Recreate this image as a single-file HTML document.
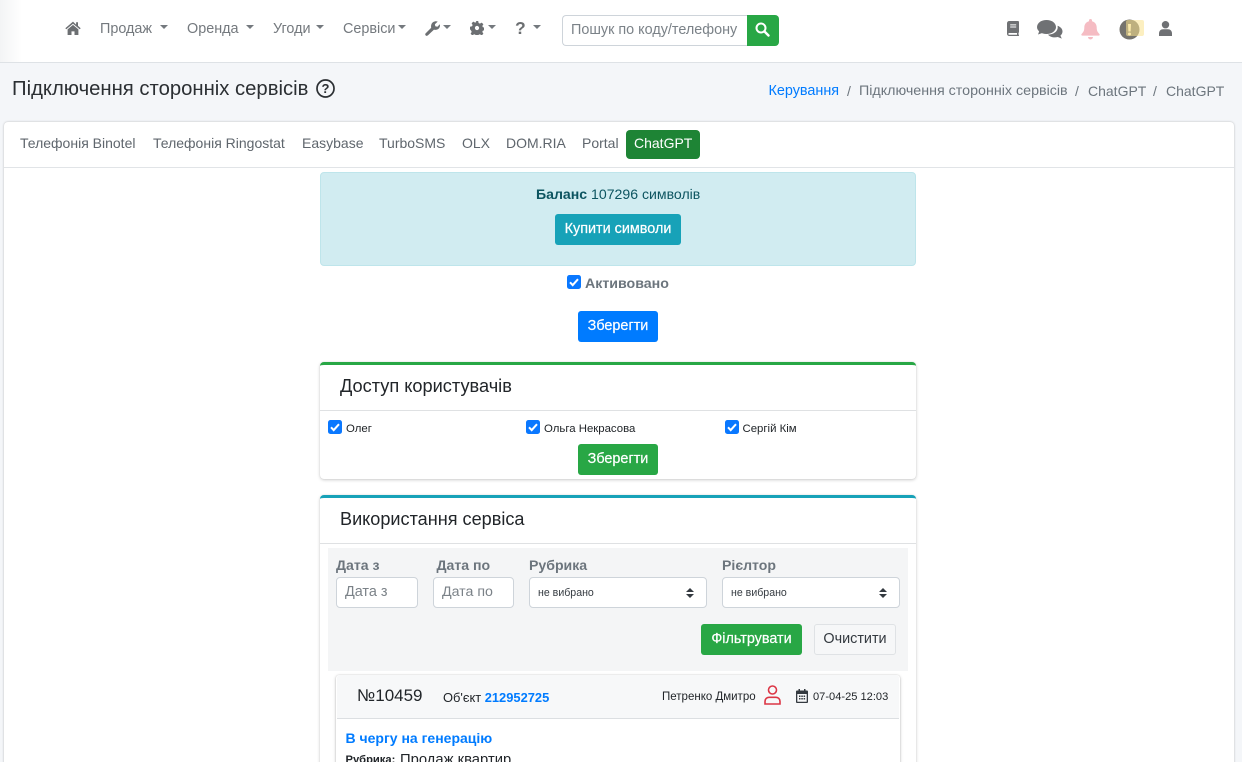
<!DOCTYPE html>
<html lang="uk"><head><meta charset="utf-8"><title>ChatGPT</title>
<style>
html,body{margin:0;padding:0;width:1242px;height:762px;overflow:hidden}
#p{width:1242px;height:762px;position:relative;overflow:hidden;background:#f4f6f9;font-family:"Liberation Sans",sans-serif;font-size:14px;color:#212529}
.a{position:absolute;white-space:nowrap;line-height:1.2}
.box{position:absolute;box-sizing:border-box}
.btn{position:absolute;box-sizing:border-box;border-radius:3px;color:#fff;font-size:14.4px;text-align:center;white-space:nowrap;-webkit-text-stroke:.2px #fff}
.nav{color:#74797e;font-size:14.4px}
.car{position:absolute;width:0;height:0;border-left:4px solid transparent;border-right:4px solid transparent;border-top:4px solid #74797e}
.tab{color:#5f666d;font-size:14px;top:135px}
.cb{position:absolute;width:14px;height:14px;background:#0a78ff;border-radius:2.5px}
.cb svg{position:absolute;left:0;top:0}
.lab{color:#6c757d;font-weight:bold;font-size:14.1px}
.inp{position:absolute;box-sizing:border-box;background:#fff;border:1px solid #ced4da;border-radius:4px}
svg{position:absolute;display:block}
</style></head><body><div id="p">

<div class="box" style="left:0;top:0;width:1242px;height:63px;background:linear-gradient(90deg,#f3f4f5 0,#fff 22px);border-bottom:1px solid #dee2e6"></div>

<svg style="left:65px;top:21px" width="16" height="14" viewBox="0 0 16 14"><path d="M8 0.6L0.3 7.2l1 1.1L8 2.7l6.7 5.6 1-1.1-2.7-2.3V1.2h-1.9v2.4zM2.6 8.4V14h3.9v-3.6h3V14h3.9V8.4L8 3.9z" fill="#6c6f72"/></svg>
<div class="a nav" style="left:100px;top:21px">Продаж</div><div class="car" style="left:160px;top:25px"></div>
<div class="a nav" style="left:187px;top:21px">Оренда</div><div class="car" style="left:246px;top:25px"></div>
<div class="a nav" style="left:273px;top:21px">Угоди</div><div class="car" style="left:316px;top:25px"></div>
<div class="a nav" style="left:343px;top:21px">Сервіси</div><div class="car" style="left:398px;top:25px"></div>
<svg style="left:425px;top:21px" width="15" height="15" viewBox="0 0 15 15"><path d="M1 14.6c-.8-.5-1-1.4-.5-2.1L6.200 6.800C5.700 4.700 6.300 2.200 8.200 1 9.800 0 11.500 0 12.700 .6L9.900 3.200l.4 2.100 2.100.5 2.400-2.600c.5 1.800-.1 3.600-1.400 4.700-1.300 1-3 1.200-4.400.7L3 14.300c-.6.600-1.400.8-2 .3z" fill="#6c6f72"/></svg><div class="car" style="left:443px;top:25px"></div>
<svg style="left:470px;top:21px" width="14" height="14" viewBox="0 0 14 14"><path d="M5.800 0h2.400l.4 2 1.300.6 1.800-1 1.700 1.700-1.100 1.700.6 1.300 2.100.5v2.400l-2.100.4-.6 1.300 1.100 1.800-1.700 1.700-1.800-1.100-1.300.5-.4 2.100H5.800l-.4-2.100-1.300-.5-1.800 1.100L.6 12.700l1.100-1.800-.6-1.300L0 8.200V5.800l2.100-.5.500-1.300-1-1.700L3.300 .6l1.800 1 1.300-.6zM7 4.900A2.100 2.100 0 1 0 7 9.100 2.100 2.100 0 0 0 7 4.900z" fill="#6c6f72"/></svg><div class="car" style="left:488px;top:25px"></div>
<div class="a" style="left:515px;top:18px;font-size:17.5px;font-weight:bold;color:#6c6f72">?</div><div class="car" style="left:533px;top:25px"></div>

<div class="box" style="left:562px;top:15px;width:186px;height:31px;background:#fff;border:1px solid #ced4da;border-right:0;border-radius:4px 0 0 4px"></div>
<div class="a" style="left:571px;top:22px;color:#7b8288;font-size:14.4px">Пошук по коду/телефону</div>
<div class="box" style="left:747px;top:15px;width:32px;height:31px;background:#28a745;border-radius:0 4px 4px 0"></div>
<svg style="left:755px;top:22px" width="15" height="15" viewBox="0 0 15 15"><circle cx="6" cy="6" r="4.500" fill="none" stroke="#fff" stroke-width="2"/><path d="M9.500 9.500L13.500 13.500" stroke="#fff" stroke-width="2.400" stroke-linecap="round"/></svg>

<svg style="left:1007px;top:21px" width="12" height="15" viewBox="0 0 12 15"><path d="M2.200 0H11a1 1 0 0 1 1 1v10c0 .4-.2.700-.5.900v1.600c.3.200.5.400.5.700v.3c0 .3-.2.500-.5.500H2.200A2.200 2.200 0 0 1 0 12.800V2.200A2.200 2.200 0 0 1 2.200 0zM2.200 12a.9.900 0 1 0 0 1.800H10V12zM3.200 3.400v1h6v-1zm0 2.100v1h6v-1z" fill-rule="evenodd" fill="#6f7174"/></svg>
<svg style="left:1037px;top:20px" width="26" height="19" viewBox="0 0 26 19"><ellipse cx="9.500" cy="7" rx="9.500" ry="7" fill="#6f7174"/><path d="M2.500 10.500L1 14.500l5-1.800z" fill="#6f7174"/><path d="M20.500 5.800c3 1 5 3.200 5 5.700 0 1.600-.8 3-2.100 4.100l1.400 3-4-1.600c-1 .3-2 .4-3 .4-2.900 0-5.400-1.100-6.800-2.800 6.100.1 10.800-3.900 9.500-8.800z" fill="#6f7174"/></svg>
<svg style="left:1081px;top:19px" width="19" height="21" viewBox="0 0 19 21"><path d="M9.500 0a1.500 1.500 0 0 1 1.500 1.500v.7c3 .7 4.700 3.200 4.700 6.200 0 3.800 1.200 5 2.700 6.600.6.700.2 1.600-.7 1.600H1.300c-.9 0-1.300-.9-.7-1.600C2.100 13.400 3.300 12.200 3.300 8.400c0-3 1.700-5.500 4.700-6.200v-.7A1.500 1.500 0 0 1 9.500 0zM7 18h5a2.500 2.500 0 0 1-5 0z" fill="#f5bcc3"/></svg>
<svg style="left:1119px;top:19px" width="21" height="21" viewBox="0 0 21 21"><circle cx="10.500" cy="10.500" r="10" fill="#75736d"/><path d="M9 5h3l-.4 7.500H9.400z" fill="#fdf3cf"/><circle cx="10.500" cy="15" r="1.500" fill="#fdf3cf"/></svg>
<div class="box" style="left:1126px;top:20px;width:18px;height:16px;background:rgba(250,225,140,.55);border-radius:2px"></div>
<svg style="left:1159px;top:21px" width="13" height="15" viewBox="0 0 13 15"><circle cx="6.500" cy="3.700" r="3.700" fill="#6f7174"/><path d="M0 15v-2.500C0 10 1.800 8.300 4 8.300h5c2.200 0 4 1.700 4 4.200V15z" fill="#6f7174"/></svg>

<div class="a" style="left:12px;top:77px;font-size:20.27px;color:#2b2f33">Підключення сторонніх сервісів</div>
<svg style="left:316px;top:79px" width="19" height="19" viewBox="0 0 19 19"><circle cx="9.500" cy="9.500" r="8.500" fill="none" stroke="#2b2f33" stroke-width="1.700"/><text x="9.500" y="14.200" font-family="Liberation Sans" font-weight="bold" font-size="13" fill="#2b2f33" text-anchor="middle">?</text></svg>

<div class="a" style="left:768.500px;top:83px;color:#007bff;font-size:14.4px">Керування</div>
<div class="a" style="left:847px;top:82.500px;color:#6c757d">/</div>
<div class="a" style="left:859px;top:83px;color:#6c757d;font-size:14.27px">Підключення сторонніх сервісів</div>
<div class="a" style="left:1075px;top:82.500px;color:#6c757d">/</div>
<div class="a" style="left:1088px;top:82.500px;color:#6c757d">ChatGPT</div>
<div class="a" style="left:1153px;top:82.500px;color:#6c757d">/</div>
<div class="a" style="left:1166px;top:82.500px;color:#6c757d">ChatGPT</div>

<div class="box" style="left:4px;top:122px;width:1230px;height:660px;background:#fff;border-radius:4px;box-shadow:0 0 2px rgba(0,0,0,.25)"></div>
<div class="box" style="left:4px;top:167px;width:1230px;height:1px;background:#e1e4e7"></div>

<div class="a tab" style="left:20px">Телефонія Binotel</div>
<div class="a tab" style="left:153px">Телефонія Ringostat</div>
<div class="a tab" style="left:302px">Easybase</div>
<div class="a tab" style="left:379px">TurboSMS</div>
<div class="a tab" style="left:462px">OLX</div>
<div class="a tab" style="left:506px">DOM.RIA</div>
<div class="a tab" style="left:582px">Portal</div>
<div class="box" style="left:626px;top:130px;width:74px;height:29px;background:#1e8435;border-radius:4px"></div>
<div class="a tab" style="left:634px;color:#fff">ChatGPT</div>

<div class="box" style="left:320px;top:172px;width:596px;height:94px;background:#d1ecf1;border:1px solid #bee5eb;border-radius:4px"></div>
<div class="a" style="left:536px;top:186px;color:#0c5460;font-size:14.1px"><b>Баланс</b> 107296 символів</div>
<div class="btn" style="left:555px;top:214px;width:126px;height:31px;line-height:30px;background:#17a2b8">Купити символи</div>

<div class="cb" style="left:567px;top:275px"><svg width="14" height="14" viewBox="0 0 14 14"><path d="M3 7.300l2.700 2.800L11 4.200" fill="none" stroke="#fff" stroke-width="2"/></svg></div>
<div class="a lab" style="left:585px;top:276px;font-size:14.2px">Активовано</div>
<div class="btn" style="left:578px;top:311px;width:80px;height:31px;line-height:30px;background:#007bff">Зберегти</div>

<div class="box" style="left:320px;top:362px;width:596px;height:117px;background:#fff;border-top:3px solid #28a745;border-radius:4px;box-shadow:0 0 1px rgba(0,0,0,.13),0 1px 3px rgba(0,0,0,.2)"></div>
<div class="a" style="left:340px;top:376px;font-size:18.2px;color:#212529">Доступ користувачів</div>
<div class="box" style="left:320px;top:410px;width:596px;height:1px;background:#dfe1e3"></div>
<div class="cb" style="left:328px;top:420px"><svg width="14" height="14" viewBox="0 0 14 14"><path d="M3 7.300l2.700 2.800L11 4.200" fill="none" stroke="#fff" stroke-width="2"/></svg></div>
<div class="a" style="left:346px;top:422.500px;font-size:11.4px;color:#212529">Олег</div>
<div class="cb" style="left:526px;top:420px"><svg width="14" height="14" viewBox="0 0 14 14"><path d="M3 7.300l2.700 2.800L11 4.200" fill="none" stroke="#fff" stroke-width="2"/></svg></div>
<div class="a" style="left:544px;top:422.500px;font-size:11.4px;color:#212529">Ольга Некрасова</div>
<div class="cb" style="left:725px;top:420px"><svg width="14" height="14" viewBox="0 0 14 14"><path d="M3 7.300l2.700 2.800L11 4.200" fill="none" stroke="#fff" stroke-width="2"/></svg></div>
<div class="a" style="left:742.500px;top:422.500px;font-size:11.4px;color:#212529">Сергій Кім</div>
<div class="btn" style="left:578px;top:444px;width:80px;height:31px;line-height:30px;background:#28a745">Зберегти</div>

<div class="box" style="left:320px;top:495px;width:596px;height:290px;background:#fff;border-top:3px solid #17a2b8;border-radius:4px;box-shadow:0 0 1px rgba(0,0,0,.13),0 1px 3px rgba(0,0,0,.2)"></div>
<div class="a" style="left:340px;top:509px;font-size:18.1px;color:#212529">Використання сервіса</div>
<div class="box" style="left:320px;top:543px;width:596px;height:1px;background:#dfe1e3"></div>

<div class="box" style="left:328px;top:548px;width:580px;height:123px;background:#f4f5f6"></div>
<div class="a lab" style="left:336px;top:557px">Дата з</div>
<div class="a lab" style="left:436.500px;top:557px">Дата по</div>
<div class="a lab" style="left:529px;top:557px">Рубрика</div>
<div class="a lab" style="left:722px;top:557px">Рієлтор</div>
<div class="inp" style="left:336px;top:577px;width:82px;height:31px"></div>
<div class="a" style="left:345px;top:584px;color:#7b8288;font-size:14.4px">Дата з</div>
<div class="inp" style="left:433px;top:577px;width:81px;height:31px"></div>
<div class="a" style="left:442px;top:584px;color:#7b8288;font-size:14.2px">Дата по</div>
<div class="inp" style="left:529px;top:577px;width:178px;height:31px"></div>
<div class="a" style="left:538px;top:587px;font-size:10.6px;color:#343a40">не вибрано</div>
<svg style="left:686px;top:588px" width="8" height="10" viewBox="0 0 8 10"><path d="M4 0L8 4H0zM4 10L0 6H8z" fill="#343a40"/></svg>
<div class="inp" style="left:722px;top:577px;width:178px;height:31px"></div>
<div class="a" style="left:731px;top:587px;font-size:10.6px;color:#343a40">не вибрано</div>
<svg style="left:879px;top:588px" width="8" height="10" viewBox="0 0 8 10"><path d="M4 0L8 4H0zM4 10L0 6H8z" fill="#343a40"/></svg>

<div class="btn" style="left:701px;top:624px;width:101px;height:31px;line-height:30px;background:#28a745">Фільтрувати</div>
<div class="btn" style="left:814px;top:624px;width:82px;height:31px;line-height:28px;background:#f6f7f8;border:1px solid #dfe2e5;color:#343a40;-webkit-text-stroke:0">Очистити</div>

<div class="box" style="left:336px;top:675px;width:564px;height:110px;background:#fff;border-radius:3px;box-shadow:0 0 1px rgba(0,0,0,.2),0 1px 3px rgba(0,0,0,.25)"></div>
<div class="box" style="left:337px;top:675px;width:562px;height:44px;background:#f7f8f9;border-bottom:1px solid #dcdfe2;border-radius:3px 3px 0 0"></div>
<div class="a" style="left:357px;top:686px;font-size:17px;color:#212529">№10459</div>
<div class="a" style="left:443px;top:690px;font-size:12.9px;color:#212529">Об'єкт <b style="color:#007bff">212952725</b></div>
<div class="a" style="left:662px;top:691px;font-size:11.500px;color:#212529">Петренко Дмитро</div>
<svg style="left:764px;top:685px" width="17" height="20" viewBox="0 0 17 20"><circle cx="8.500" cy="5" r="4" fill="none" stroke="#dc3545" stroke-width="1.600"/><path d="M1 19v-2.500C1 14 2.800 12.300 5 12.300h7c2.200 0 4 1.700 4 4.200V19z" fill="none" stroke="#dc3545" stroke-width="1.600"/></svg>
<svg style="left:796px;top:689px" width="12" height="14" viewBox="0 0 12 14"><path d="M2.500 0h1.500v1.500h4V0h1.500v1.500H11a1 1 0 0 1 1 1V13a1 1 0 0 1-1 1H1a1 1 0 0 1-1-1V2.500a1 1 0 0 1 1-1h1.500zM1.300 5v7.700h9.400V5z" fill-rule="evenodd" fill="#343a40"/><path d="M3 6.500h1.500V8H3zm2.300 0h1.500V8H5.300zm2.300 0h1.500V8H7.600zM3 9h1.500v1.500H3zm2.300 0h1.500v1.500H5.300zm2.300 0h1.500v1.500H7.600z" fill="#343a40"/></svg>
<div class="a" style="left:813px;top:691px;font-size:11.1px;color:#212529">07-04-25 12:03</div>

<div class="a" style="left:345.500px;top:730px;font-weight:bold;font-size:14px;color:#007bff">В чергу на генерацію</div>
<div class="a" style="left:345.500px;top:753.500px;font-size:11.2px;font-weight:bold;color:#212529">Рубрика:</div>
<div class="a" style="left:400px;top:751.500px;font-size:14.8px;color:#212529">Продаж квартир</div>

</div></body></html>
